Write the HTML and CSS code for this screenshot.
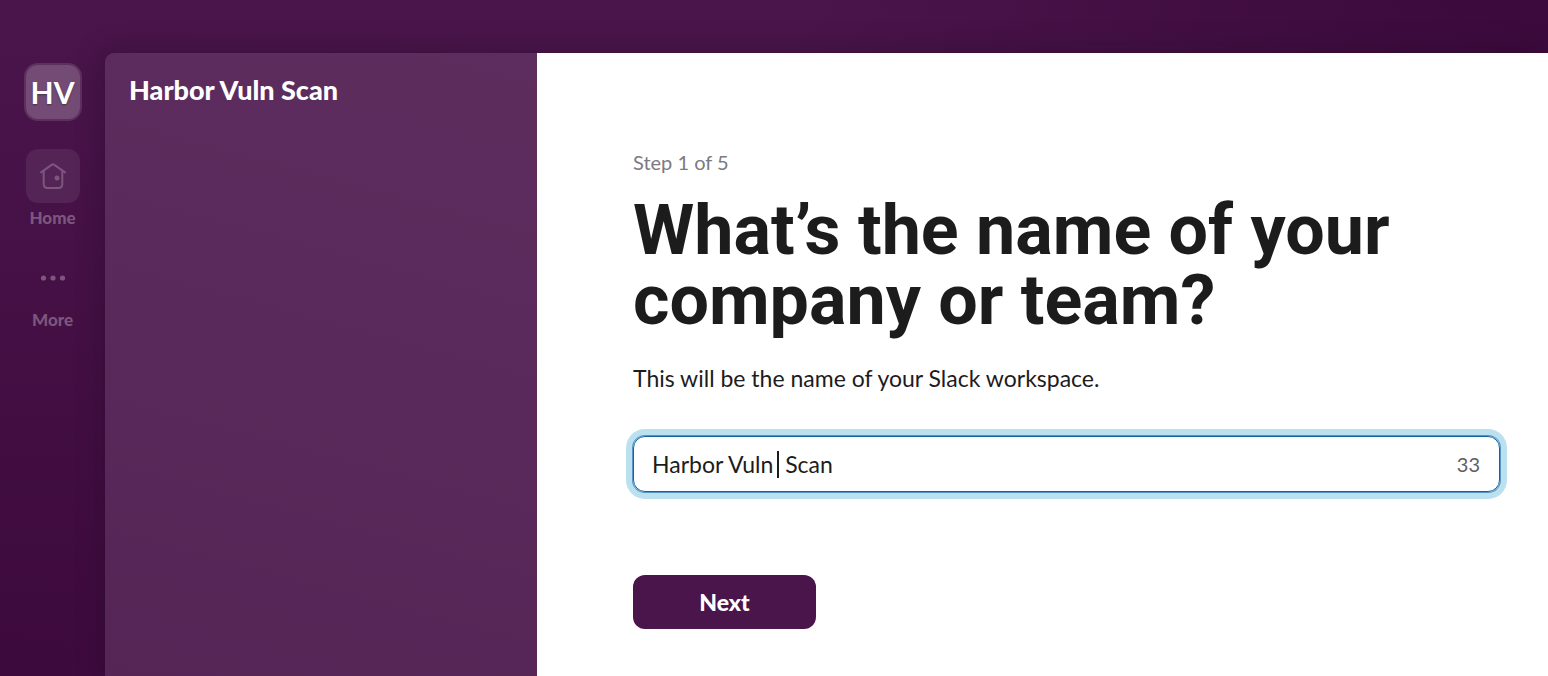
FILE: index.html
```html
<!DOCTYPE html>
<html lang="en">
<head>
<meta charset="utf-8">
<title>Create a workspace</title>
<link rel="stylesheet" href="styles.css">
</head>
<body>
<div class="app">
  <nav class="rail" aria-label="Workspace">
    <div class="workspace-badge">HV</div>
    <button class="rail-item" type="button">
      <span class="rail-icon rail-icon-active">
        <svg width="28" height="28" viewBox="0 0 28 28" fill="none" stroke="currentColor" stroke-width="2" stroke-linecap="round" stroke-linejoin="round" aria-hidden="true">
          <path d="M2 10.400 13 2.600q1-.7 2 0L26 10.400"/>
          <path d="M4.700 9v13q0 4 4 4h10.600q4 0 4-4V9"/>
          <circle cx="18" cy="16" r="2.500" fill="currentColor" stroke="none"/>
        </svg>
      </span>
      <span>Home</span>
    </button>
    <button class="rail-item" type="button">
      <span class="rail-icon">
        <svg width="26" height="6" viewBox="0 0 26 6" fill="currentColor" aria-hidden="true">
          <circle cx="3.500" cy="3" r="2.600"/>
          <circle cx="13" cy="3" r="2.600"/>
          <circle cx="22.500" cy="3" r="2.600"/>
        </svg>
      </span>
      <span>More</span>
    </button>
  </nav>
  <div class="workspace">
    <aside class="sidebar">
      <h2 class="sidebar-title">Harbor Vuln Scan</h2>
    </aside>
    <main class="content">
      <form class="setup">
        <p class="step">Step 1 of 5</p>
        <h1 class="question"><label for="team-name">What’s the name of your company or team?</label></h1>
        <p class="hint" id="team-hint">This will be the name of your Slack workspace.</p>
        <div class="field">
          <input class="field-input" id="team-name" type="text" maxlength="50" value="Harbor Vuln  Scan" aria-describedby="team-hint" autocomplete="off">
          <span class="field-caret"></span>
          <span class="field-count">33</span>
        </div>
        <button class="next" type="button">Next</button>
      </form>
    </main>
  </div>
</div>
</body>
</html>
```
FILE: styles.css
```css
* {
  box-sizing: border-box;
}

body {
  margin: 0;
  font-family: Lato, "Liberation Sans", sans-serif;
  color: #1d1c1d;
}

p,
h1,
h2 {
  margin: 0;
}

button,
input {
  font: inherit;
  color: inherit;
}

.app {
  display: flex;
  min-height: 100vh;
  padding-top: 53px;
  overflow: hidden;
  background:
    radial-gradient(ellipse at 100% 0, #3b093b 0, rgba(59, 9, 59, 0) 35%),
    radial-gradient(ellipse at 0 100%, #3d0a3d 0, rgba(61, 10, 61, 0) 70%),
    #4a154b;
}

.rail {
  flex: none;
  display: flex;
  flex-direction: column;
  align-items: center;
  width: 105px;
  padding-top: 12px;
}

.workspace-badge {
  display: grid;
  place-items: center;
  width: 54px;
  height: 54px;
  margin-bottom: 30px;
  border-radius: 12px;
  background: #734b75;
  box-shadow: 0 0 0 2px rgba(115, 75, 117, 0.5);
  color: #fff;
  font-size: 30px;
  font-weight: 700;
  text-shadow: 0 1px 2px rgba(0, 0, 0, 0.4);
}

.rail-item {
  display: flex;
  flex-direction: column;
  align-items: center;
  margin-bottom: 18px;
  padding: 0;
  border: 0;
  background: none;
  color: #7d567e;
  font-size: 17px;
  font-weight: 900;
  line-height: 30px;
}

.rail-icon {
  display: grid;
  place-items: center;
  width: 54px;
  height: 54px;
  border-radius: 12px;
}

.rail-icon-active {
  background: #532455;
}

.workspace {
  flex: 1;
  display: flex;
  min-width: 0;
  border-top-left-radius: 9px;
  box-shadow: 0 0 28px rgba(20, 10, 25, 0.35);
}

.sidebar {
  flex: none;
  width: 432px;
  padding: 19px 24px;
  border-top-left-radius: 9px;
  background: linear-gradient(195deg, #5d2d5e, #5a2a5c 40%, #542555);
}

.sidebar-title {
  color: #fff;
  font-size: 27px;
  font-weight: 900;
  line-height: 36px;
}

.content {
  flex: 1;
  min-width: 0;
  padding: 95px 48px 47px 96px;
  background: #fff;
}

.step {
  color: #7c7a7f;
  font-size: 20px;
  line-height: 28px;
}

.question {
  max-width: 800px;
  margin-top: 19px;
  font-family: Roboto, Lato, sans-serif;
  font-size: 70px;
  font-weight: 700;
  line-height: 70px;
}

.hint {
  margin-top: 26px;
  font-size: 23px;
  line-height: 34px;
}

.field {
  position: relative;
  display: flex;
  align-items: center;
  height: 56px;
  margin-top: 41px;
  padding: 0 19px 0 18px;
  border: 1px solid #1264a3;
  border-radius: 12px;
  box-shadow: 0 0 0 1px rgba(18, 100, 163, 0.6), 0 0 0 7px #bbe1f0;
}

.field-input {
  flex: 1;
  min-width: 0;
  padding: 0;
  border: 0;
  outline: 0;
  background: none;
  font-size: 23px;
  line-height: 34px;
}

.field-caret {
  position: absolute;
  left: 143px;
  width: 2px;
  height: 27px;
  background: #1d1c1d;
}

.field-count {
  color: #616061;
  font-size: 20px;
}

.next {
  display: block;
  width: 183px;
  height: 54px;
  margin-top: 83px;
  border: 0;
  border-radius: 12px;
  background: #4a154b;
  color: #fff;
  font-size: 23px;
  font-weight: 900;
}
```
